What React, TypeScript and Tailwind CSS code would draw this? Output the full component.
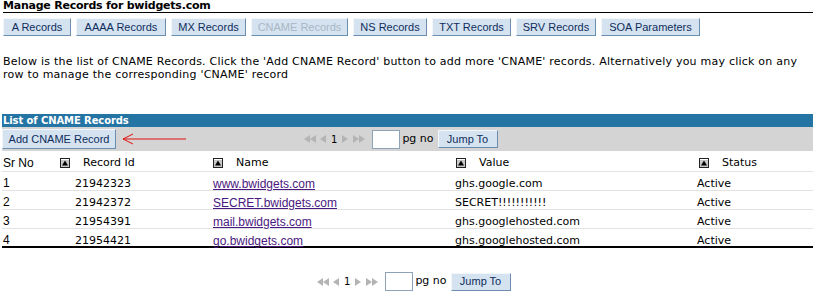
const tabs = [
  { label: "A Records", w: "w-[68px]" },
  { label: "AAAA Records", w: "w-[90px]" },
  { label: "MX Records", w: "w-[75px]" },
  { label: "CNAME Records", w: "w-[97px]", disabled: true },
  { label: "NS Records", w: "w-[74px]" },
  { label: "TXT Records", w: "w-[79px]" },
  { label: "SRV Records", w: "w-[80px]" },
  { label: "SOA Parameters", w: "w-[99px]" },
];

const rows = [
  { no: "1", id: "21942323", name: "www.bwidgets.com", value: "ghs.google.com", status: "Active" },
  { no: "2", id: "21942372", name: "SECRET.bwidgets.com", value: "SECRET!!!!!!!!!!!", status: "Active" },
  { no: "3", id: "21954391", name: "mail.bwidgets.com", value: "ghs.googlehosted.com", status: "Active" },
  { no: "4", id: "21954421", name: "go.bwidgets.com", value: "ghs.googlehosted.com", status: "Active" },
];

const tahoma = "font-['Liberation_Sans',Arial,sans-serif]";
const verdana = "font-['DejaVu_Sans',Verdana,sans-serif]";
const btn =
  "bg-[#d5e3f1] border-t border-l border-t-[#f2f7fc] border-l-[#f2f7fc] border-r border-b border-r-[#6b8db0] border-b-[#6b8db0] text-[#0f2d5c] text-[11px] flex items-center justify-center";

function SortIcon() {
  return (
    <svg width="10" height="10" viewBox="0 0 10 10" className="shrink-0">
      <rect x="0.5" y="0.5" width="9" height="9" fill="#c8c8c8" stroke="#222" />
      <rect x="1" y="1" width="8" height="1" fill="#fff" />
      <path d="M5 2.5 L8 7.5 L2 7.5 Z" fill="#000" />
    </svg>
  );
}

function Tri({ dir }: { dir: "l" | "r" }) {
  return (
    <svg width="6" height="8" viewBox="0 0 6 8">
      <path d={dir === "l" ? "M6 0 L0 4 L6 8 Z" : "M0 0 L6 4 L0 8 Z"} fill="#b4b4b4" />
    </svg>
  );
}

function Pager({ className }: { className: string }) {
  return (
    <div className={`flex items-center ${className}`}>
      <div className="flex items-center">
        <Tri dir="l" />
        <Tri dir="l" />
      </div>
      <div className="ml-[4px]">
        <Tri dir="l" />
      </div>
      <span className={`${verdana} text-[10px] text-black mx-[5px]`}>1</span>
      <Tri dir="r" />
      <div className="flex items-center ml-[5px]">
        <Tri dir="r" />
        <Tri dir="r" />
      </div>
      <div className="ml-[7px] w-[28px] h-[19px] bg-white border border-[#8fa3b8]" />
      <span className={`${verdana} text-[11px] text-black ml-[2px]`}>pg no</span>
      <div className={`${btn} ${tahoma} ml-[4px] w-[60px] h-[18px]`}>Jump To</div>
    </div>
  );
}

export default function App() {
  return (
    <div className="w-[815px] h-[297px] bg-white overflow-hidden text-black">
      <div className={`${verdana} ml-[3px] mr-[2px] border-b border-black text-[11px] font-bold leading-[12px] tracking-[-0.23px]`}>
        Manage Records for bwidgets.com
      </div>

      <div className="flex gap-[5px] pl-[3px] mt-[5px]">
        {tabs.map((t) => (
          <div
            key={t.label}
            className={`${btn} ${tahoma} ${t.w} h-[18px] ${t.disabled ? "!text-[#a9b6c4]" : ""}`}
          >
            {t.label}
          </div>
        ))}
      </div>

      <p className={`${verdana} text-[11px] leading-[13px] ml-[3px] mt-[19px] tracking-[0.23px] whitespace-nowrap`}>
        Below is the list of CNAME Records. Click the 'Add CNAME Record' button to add more 'CNAME' records. Alternatively you may click on any
        <br />
        row to manage the corresponding 'CNAME' record
      </p>

      <div className="ml-[2px] w-[811px] mt-[33px]">
        <div className={`${verdana} h-[13px] bg-[#2474a4] text-white text-[10px] font-bold leading-[13px] pl-[1px] tracking-[-0.1px]`}>
          List of CNAME Records
        </div>

        <div className="h-[24px] bg-[#d4d4d4] flex items-center">
          <div className={`${btn} ${tahoma} w-[114px] h-[20px]`}>Add CNAME Record</div>
          <svg width="66" height="14" viewBox="0 0 66 14" className="ml-[6px]">
            <path d="M1 7 L64 7 M1 7 L11 2 M1 7 L11 12" stroke="#e01010" strokeWidth="1" fill="none" />
          </svg>
          <Pager className="ml-[116px]" />
        </div>

        <div className="grid grid-cols-[56px_153px_243px_243px_116px] h-[21px] pt-[3px] items-center border-b border-[#e2e2e2] text-[11px]">
          <span className={`${tahoma} text-[12px] pl-[1px]`}>Sr No</span>
          {["Record Id", "Name", "Value", "Status"].map((h) => (
            <div key={h} className="flex items-center pl-[2px]">
              <SortIcon />
              <span className={`${verdana} ml-[13px]`}>{h}</span>
            </div>
          ))}
        </div>

        {rows.map((r, i) => (
          <div
            key={r.id}
            className={`grid grid-cols-[56px_153px_243px_243px_116px] h-[19px] pt-[3px] items-center text-[11px] ${
              i === rows.length - 1 ? "border-b-2 border-black" : "border-b border-[#e2e2e2]"
            }`}
          >
            <span className={`${tahoma} text-[12px] pl-[1px] -mt-[3px]`}>{r.no}</span>
            <span className={`${verdana} pl-[17px]`}>{r.id}</span>
            <a href="#" className={`${tahoma} text-[12px] text-[#4a1880] underline pl-[2px]`}>
              {r.name}
            </a>
            <span className={`${verdana} pl-[1px]`}>{r.value}</span>
            <span className={`${verdana}`}>{r.status}</span>
          </div>
        ))}
      </div>

      <Pager className="ml-[317px] mt-[24px]" />
    </div>
  );
}
